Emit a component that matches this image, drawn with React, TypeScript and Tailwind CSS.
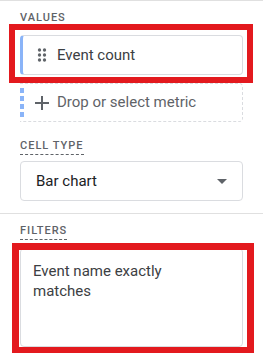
import React from "react";

function DragIcon() {
  return (
    <svg width="20" height="20" viewBox="0 0 24 24" fill="#5f6368">
      <circle cx="9" cy="6" r="2" />
      <circle cx="15" cy="6" r="2" />
      <circle cx="9" cy="12" r="2" />
      <circle cx="15" cy="12" r="2" />
      <circle cx="9" cy="18" r="2" />
      <circle cx="15" cy="18" r="2" />
    </svg>
  );
}

function AddIcon() {
  return (
    <svg width="24" height="24" viewBox="0 0 24 24" fill="#5f6368">
      <path d="M19 13h-6v6h-2v-6H5v-2h6V5h2v6h6v2z" />
    </svg>
  );
}

function ArrowDrop() {
  return (
    <svg width="24" height="24" viewBox="0 0 24 24" fill="#5f6368">
      <path d="M7 10l5 5 5-5z" />
    </svg>
  );
}

export default function App() {
  return (
    <div
      className="relative w-[263px] h-[353px] overflow-hidden bg-white border-t border-[#e0e0e0]"
      style={{ fontFamily: "Roboto, 'Liberation Sans', sans-serif" }}
    >
      <div className="px-5 pt-[9px]">
        <div className="text-[11px] leading-4 font-medium tracking-[1px] text-[#5f6368]">VALUES</div>
        <div className="mt-[9px] h-10 flex items-center rounded border border-[#dadce0] border-l-[3px] border-l-[#8ab4f8] pl-[9px]">
          <DragIcon />
          <span className="ml-[5px] text-[15px] text-[#3c4043]">Event count</span>
        </div>
        <div className="mt-2 h-[39px] flex items-center rounded-r border border-dashed border-l-0 border-[#dadce0] relative">
          <div className="absolute left-0 top-[4px] bottom-[4px] w-[4px] bg-[repeating-linear-gradient(to_bottom,#8ab4f8_0,#8ab4f8_5px,transparent_5px,transparent_8px)]" />
          <div className="ml-[10px] flex items-center">
            <AddIcon />
            <span className="ml-[3px] text-[15px] text-[#5f6368]">Drop or select metric</span>
          </div>
        </div>
        <div className="mt-4 w-fit text-[11px] leading-4 font-medium tracking-[1px] text-[#5f6368] border-b border-dashed border-[#5f6368]">
          CELL TYPE
        </div>
        <div className="mt-[6px] h-10 flex items-center justify-between rounded border border-[#dadce0] pl-[15px] pr-2">
          <span className="text-[15px] text-[#202124]">Bar chart</span>
          <ArrowDrop />
        </div>
      </div>
      <div className="mt-3 border-t border-[#e0e0e0]" />
      <div className="px-5 pt-[9px]">
        <div className="w-fit text-[11px] leading-4 font-medium tracking-[1px] text-[#5f6368] border-b border-dashed border-[#5f6368]">
          FILTERS
        </div>
        <div className="mt-2 h-[99px] rounded border border-[#dadce0] pl-3 pt-3 text-[15px] leading-5 text-[#3c4043]">
          Event name exactly
          <br />
          matches
        </div>
      </div>
      <div className="absolute left-[9px] top-[23px] w-[244px] h-[59px] border-[6px] border-[#e3191e]" />
      <div className="absolute left-[12px] top-[242px] w-[242px] h-[111px] border-[7px] border-[#e3191e]" />
    </div>
  );
}
